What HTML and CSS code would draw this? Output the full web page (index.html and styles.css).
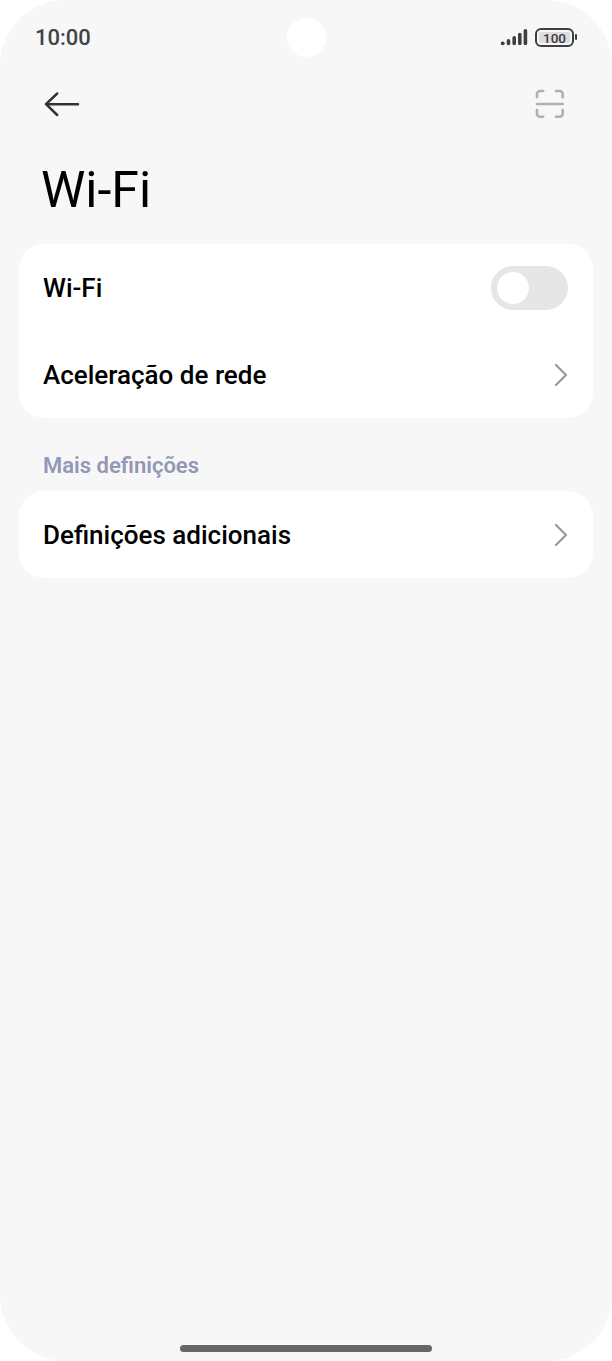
FILE: index.html
```html
<!DOCTYPE html>
<html lang="pt">
<head>
<meta charset="utf-8">
<title>Wi-Fi</title>
<link rel="stylesheet" href="styles.css">
</head>
<body>
<div class="screen">
  <header class="status">
    <span class="time">10:00</span>
    <span class="camera"></span>
    <div class="indicators">
      <svg class="signal" width="28" height="18" viewBox="0 0 28 18" fill="none" stroke="#3f3f41" stroke-width="3.6" stroke-linecap="round">
        <path d="M2.5 15.4h.4M8.5 12.9v2.5M14.2 9.9v5.5M19.8 6.5v8.9M25.4 2.7v12.7"/>
      </svg>
      <div class="battery"><span class="level">100</span></div>
      <span class="battery-tip"></span>
    </div>
  </header>
  <nav class="toolbar">
    <svg width="36" height="26" viewBox="0 0 36 26" fill="none" stroke="#333" stroke-width="2.5" stroke-linecap="round" stroke-linejoin="round">
      <path d="M34 13.2H2M13.2 2.5 2 13.2l11.2 10.8"/>
    </svg>
    <svg width="30" height="30" viewBox="0 0 30 30" fill="none" stroke="#b0b0b0" stroke-width="2.6" stroke-linecap="round">
      <path d="M2 8.2V5a3 3 0 0 1 3-3h3.2M21 2h3.7a3 3 0 0 1 3 3v3.2M27.700 21v3.700a3 3 0 0 1-3 3H21M8.200 27.700H5a3 3 0 0 1-3-3V21M2 15h25.700"/>
    </svg>
  </nav>
  <h1 class="title">Wi-Fi</h1>
  <section class="card">
    <div class="row"><span>Wi-Fi</span><span class="switch"><span class="knob"></span></span></div>
    <div class="row"><span>Aceleração de rede</span>
      <svg class="chevron" width="14" height="24" viewBox="0 0 14 24"><path d="M2 2l10 10L2 22"/></svg>
    </div>
  </section>
  <h2 class="section-title">Mais definições</h2>
  <section class="card">
    <div class="row"><span>Definições adicionais</span>
      <svg class="chevron" width="14" height="24" viewBox="0 0 14 24"><path d="M2 2l10 10L2 22"/></svg>
    </div>
  </section>
  <div class="home-bar"></div>
</div>
</body>
</html>
```
FILE: styles.css
```css
* { box-sizing: border-box; }
body { margin: 0; background: #fff; font-family: Roboto, "Liberation Sans", sans-serif; color: #000; }
.screen {
  display: flex;
  flex-direction: column;
  width: 612px;
  height: 1361px;
  padding: 0 19px 9px;
  background: #f7f7f7;
  border-radius: 66px;
}
.status {
  display: grid;
  grid-template-columns: 1fr 38px 1fr;
  align-items: center;
  height: 74px;
  padding: 0 16px;
}
.time { padding-top: 2px; font-size: 22px; line-height: 26px; font-weight: 500; color: #434345; }
.camera { width: 39px; height: 39px; border-radius: 50%; background: #fff; }
.indicators { display: flex; align-items: center; justify-content: flex-end; }
.signal { margin-right: 7px; }
.battery { width: 39px; height: 19px; padding: 2px; border: 2px solid #3f3f41; border-radius: 6px; }
.level {
  display: block;
  height: 11px;
  border-radius: 2px;
  background: #dcdce1;
  color: #3a3a3c;
  font-size: 13.5px;
  line-height: 12px;
  font-weight: 500;
  text-align: center;
}
.battery-tip { width: 2px; height: 6px; margin-left: 1px; border-radius: 1px; background: #3f3f41; }
.toolbar { display: flex; align-items: center; justify-content: space-between; height: 60px; padding: 0 28px 0 25px; }
.title { height: 110px; margin: 0; padding-left: 22px; font-size: 50px; line-height: 113px; font-weight: 400; }
.card { border-radius: 25px; background: #fff; }
.row {
  display: flex;
  align-items: center;
  justify-content: space-between;
  height: 87px;
  padding: 0 25px 0 24px;
  font-size: 26px;
  line-height: 30px;
  font-weight: 500;
}
.switch { display: flex; align-items: center; width: 77px; height: 44px; padding: 0 6px; border-radius: 22px; background: #e6e6e6; }
.knob { width: 32px; height: 32px; border-radius: 50%; background: #fff; }
.chevron { fill: none; stroke: #999; stroke-width: 2.2; stroke-linecap: round; stroke-linejoin: round; }
.section-title { height: 73px; margin: 0; padding-left: 24px; font-size: 22px; line-height: 95px; font-weight: 600; color: #9298b5; }
.home-bar { width: 252px; height: 7px; margin: auto auto 0; border-radius: 4px; background: #666; }
```
